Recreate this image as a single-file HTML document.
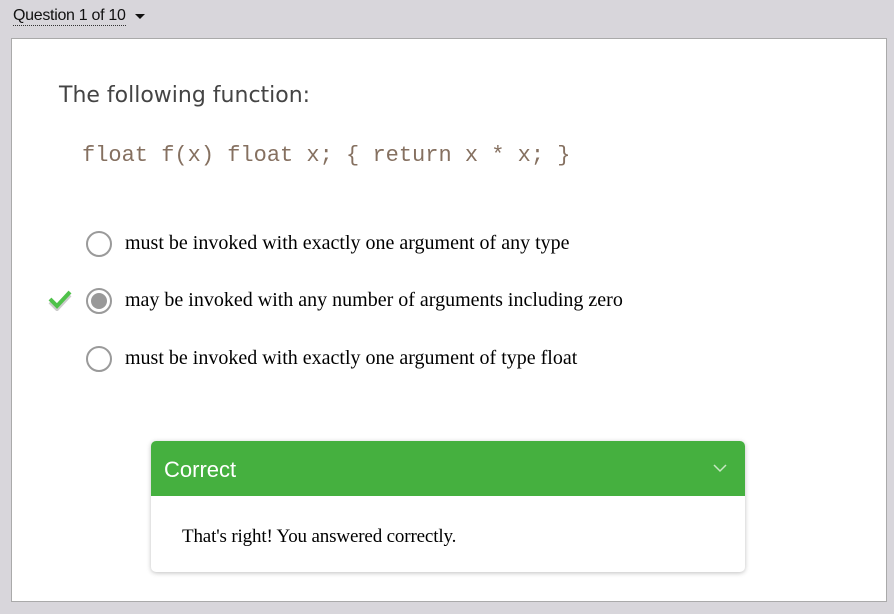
<!DOCTYPE html><html><head><style>
body{margin:0;width:894px;height:614px;background:#d8d6db;position:relative;overflow:hidden;font-family:"Liberation Serif",serif}
.q{position:absolute;left:13px;top:7px;font:16px "Liberation Sans",sans-serif;color:#111;border-bottom:1px dotted #333;line-height:18px;letter-spacing:-0.3px}
.tri{position:absolute;left:135px;top:14px;width:0;height:0;border-left:5px solid transparent;border-right:5px solid transparent;border-top:5px solid #111}
.panel{position:absolute;left:11px;top:38px;width:874px;height:562px;background:#fff;border:1px solid #aaa}
.t{position:absolute;left:59px;top:83px;font:22px "DejaVu Sans",sans-serif;color:#444}
.code{position:absolute;left:82px;top:143px;font:22px "Liberation Mono",monospace;color:#857060;white-space:pre}
.r{position:absolute;left:86px;width:22px;height:22px;border:2.5px solid #9a9a9a;border-radius:50%;background:#fff}
.r.s::after{content:"";position:absolute;left:3px;top:3px;width:16px;height:16px;border-radius:50%;background:#999}
.l{position:absolute;left:125px;font-size:20px;color:#000}
.fb{position:absolute;left:151px;top:441px;width:594px;height:131px;background:#fff;border-radius:5px;box-shadow:0 1px 5px rgba(0,0,0,.25);overflow:hidden}
.h{height:55px;background:#45b03f;color:#fff;font:22px "Liberation Sans",sans-serif;line-height:58px;padding-left:13px;position:relative}
.b{position:absolute;left:31px;top:85px;font-size:19px;letter-spacing:-0.15px}
</style></head><body>
<div class="q">Question 1 of 10</div><div class="tri"></div>
<div class="panel"></div>
<div class="t">The following function:</div>
<div class="code">float f(x) float x; { return x * x; }</div>
<div class="r" style="top:231px"></div><div class="l" style="top:232px">must be invoked with exactly one argument of any type</div>
<svg style="position:absolute;left:47px;top:289px" width="26" height="22"><path d="M3 11 L10 18 L23 4" fill="none" stroke="#ccc" stroke-width="4" transform="translate(0,2)"/><path d="M3 10 L10 17 L23 3" fill="none" stroke="#4fc24a" stroke-width="4"/></svg>
<div class="r s" style="top:288px"></div><div class="l" style="top:289px">may be invoked with any number of arguments including zero</div>
<div class="r" style="top:346px"></div><div class="l" style="top:347px">must be invoked with exactly one argument of type float</div>
<div class="fb"><div class="h">Correct<svg style="position:absolute;right:18px;top:23px" width="14" height="9"><path d="M1 1 L7 7 L13 1" fill="none" stroke="#c8e8c4" stroke-width="1.5"/></svg></div>
<div class="b">That's right! You answered correctly.</div></div>
</body></html>
